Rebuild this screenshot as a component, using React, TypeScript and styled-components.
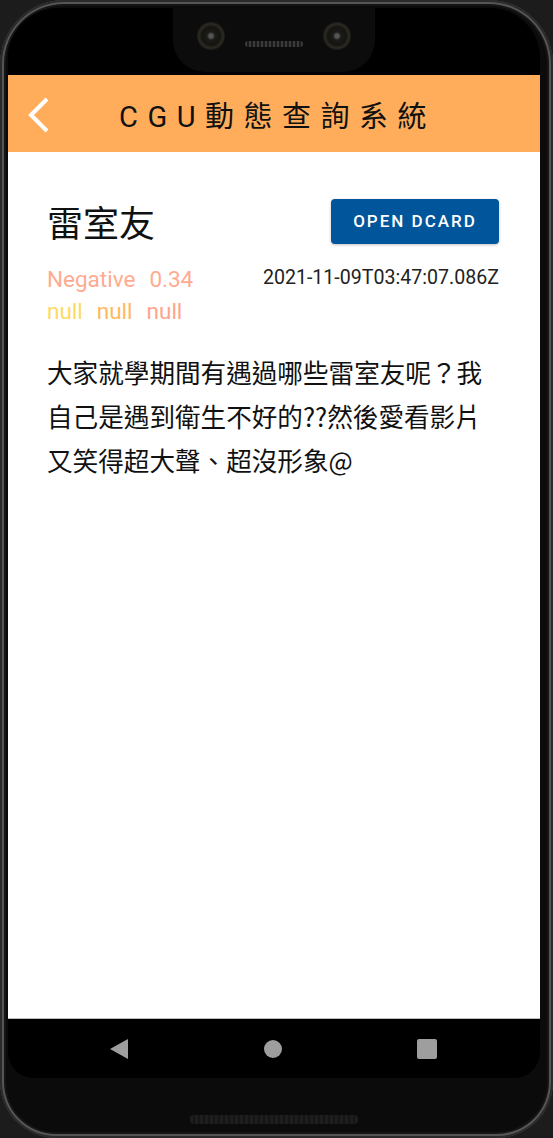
import React from "react";
import styled, { createGlobalStyle } from "styled-components";

const GlobalStyle = createGlobalStyle`
  html, body {
    margin: 0;
    padding: 0;
    background: #1c1c1c;
  }
  #root {
    width: 553px;
    height: 1138px;
  }
`;

const Phone = styled.div`
  width: 553px;
  height: 1138px;
  box-sizing: border-box;
  padding: 8px 13px 0 8px;
  background: #0b0b0b;
  border-radius: 64px 64px 56px 56px;
  box-shadow: inset 0 0 0 2px #2a2a2a, inset 0 0 0 4px #555, inset 0 0 0 6px #151515;
  display: flex;
  flex-direction: column;
  overflow: hidden;
`;

const Device = styled.div`
  flex: 0 0 1070px;
  display: flex;
  flex-direction: column;
  background: #000;
  border-radius: 50px 50px 26px 26px;
  overflow: hidden;
`;

const TopBezel = styled.div`
  height: 67px;
  flex: 0 0 67px;
  display: flex;
  justify-content: center;
`;

const Notch = styled.div`
  width: 202px;
  height: 72px;
  margin-top: -8px;
  background: #0c0c0c;
  border-radius: 0 0 32px 32px;
  display: flex;
  align-items: center;
  justify-content: space-between;
  padding: 0 24px;
  box-sizing: border-box;
`;

const Camera = styled.div`
  width: 28px;
  height: 28px;
  border-radius: 50%;
  background: radial-gradient(circle at 50% 50%, #555 0 2px, #1c1c18 4px, #141410 9px, #2c2a22 12px, #1a1914 14px);
`;

const Grille = styled.div`
  width: 58px;
  height: 6px;
  margin-top: 16px;
  border-radius: 3px;
  background: repeating-linear-gradient(90deg, #3a3a3a 0 2px, #1a1a1a 2px 4px);
`;

const Screen = styled.div`
  flex: 1;
  background: #fff;
  display: flex;
  flex-direction: column;
  border-bottom: 1px solid #bdbdbd;
`;

const Header = styled.header`
  height: 77px;
  flex: 0 0 77px;
  background: #ffad5b;
  display: flex;
  align-items: center;
  position: relative;
`;

const BackButton = styled.button`
  position: absolute;
  left: 14px;
  top: 20px;
  width: 32px;
  height: 40px;
  padding: 0;
  border: 0;
  background: transparent;
  display: flex;
  align-items: center;
  justify-content: center;
`;

const HeaderTitle = styled.h1`
  margin: 0 0 0 111px;
  font-family: Roboto, "Noto Sans CJK TC", sans-serif;
  font-size: 29px;
  font-weight: 400;
  letter-spacing: 9.5px;
  color: #111;
`;

const Content = styled.main`
  flex: 1;
  padding: 46px 41px 0 39px;
  display: flex;
  flex-direction: column;
`;

const TitleRow = styled.div`
  display: flex;
  align-items: center;
  justify-content: space-between;
`;

const PostTitle = styled.h2`
  margin: 0;
  font-family: "Noto Sans CJK TC", sans-serif;
  font-size: 36px;
  font-weight: 400;
  color: #111;
  line-height: 46px;
`;

const DcardButton = styled.button`
  width: 168px;
  height: 45px;
  border: 0;
  border-radius: 4px;
  background: #01559a;
  color: #fff;
  font-family: Roboto, sans-serif;
  font-size: 17px;
  font-weight: 500;
  letter-spacing: 2px;
  box-shadow: 0 1px 3px rgba(0, 0, 0, 0.25);
`;

const MetaRow = styled.div`
  display: flex;
  justify-content: space-between;
  align-items: flex-start;
  margin-top: 19px;
`;

const Scores = styled.div`
  display: flex;
  flex-direction: column;
`;

const ScoreLine = styled.div`
  display: flex;
  gap: 14px;
  font-family: Roboto, sans-serif;
  font-size: 22.5px;
  line-height: 32px;
`;

const Score = styled.span<{ $color: string }>`
  color: ${(p) => p.$color};
`;

const DateText = styled.span`
  font-family: Roboto, sans-serif;
  font-size: 19.6px;
  color: #222;
  line-height: 30px;
`;

const Body = styled.p`
  margin: 23px 0 0;
  font-family: "Noto Sans CJK TC", sans-serif;
  font-size: 25.6px;
  line-height: 44px;
  color: #111;
`;

const NavBar = styled.nav`
  height: 59px;
  flex: 0 0 59px;
  display: flex;
  align-items: center;
  justify-content: center;
  gap: 134px;
  padding-right: 2px;
`;

const NavIcon = styled.svg`
  width: 20px;
  height: 22px;
  fill: #9e9e9e;
`;

const Chin = styled.div`
  flex: 1;
  display: flex;
  justify-content: center;
  padding-top: 37px;
  box-sizing: border-box;
`;

const Speaker = styled.div`
  width: 168px;
  height: 9px;
  border-radius: 4px;
  background: repeating-linear-gradient(90deg, #1e1e1e 0 3px, #151515 3px 5px);
`;

const App: React.FC = () => {
  return (
    <>
      <GlobalStyle />
      <Phone>
        <Device>
          <TopBezel>
            <Notch>
              <Camera />
              <Grille />
              <Camera />
            </Notch>
          </TopBezel>
          <Screen>
            <Header>
              <BackButton aria-label="back">
                <svg width="26" height="38" viewBox="0 0 26 38">
                  <path d="M22 3 L6 19 L22 35" fill="none" stroke="#fff" strokeWidth="4" />
                </svg>
              </BackButton>
              <HeaderTitle>CGU動態查詢系統</HeaderTitle>
            </Header>
            <Content>
              <TitleRow>
                <PostTitle>雷室友</PostTitle>
                <DcardButton>OPEN DCARD</DcardButton>
              </TitleRow>
              <MetaRow>
                <Scores>
                  <ScoreLine>
                    <Score $color="#ffab91">Negative</Score>
                    <Score $color="#ffab91">0.34</Score>
                  </ScoreLine>
                  <ScoreLine>
                    <Score $color="#ffd95e">null</Score>
                    <Score $color="#ffb95c">null</Score>
                    <Score $color="#ffa48a">null</Score>
                  </ScoreLine>
                </Scores>
                <DateText>2021-11-09T03:47:07.086Z</DateText>
              </MetaRow>
              <Body>
                大家就學期間有遇過哪些雷室友呢？我自己是遇到衛生不好的??然後愛看影片又笑得超大聲、超沒形象@
              </Body>
            </Content>
          </Screen>
          <NavBar>
            <NavIcon viewBox="0 0 20 22">
              <path d="M19 1 L19 21 L1 11 Z" />
            </NavIcon>
            <NavIcon viewBox="0 0 20 22">
              <circle cx="10" cy="11" r="9" />
            </NavIcon>
            <NavIcon viewBox="0 0 20 22">
              <rect x="0" y="1" width="20" height="20" rx="2" />
            </NavIcon>
          </NavBar>
        </Device>
        <Chin>
          <Speaker />
        </Chin>
      </Phone>
    </>
  );
};

export default App;
